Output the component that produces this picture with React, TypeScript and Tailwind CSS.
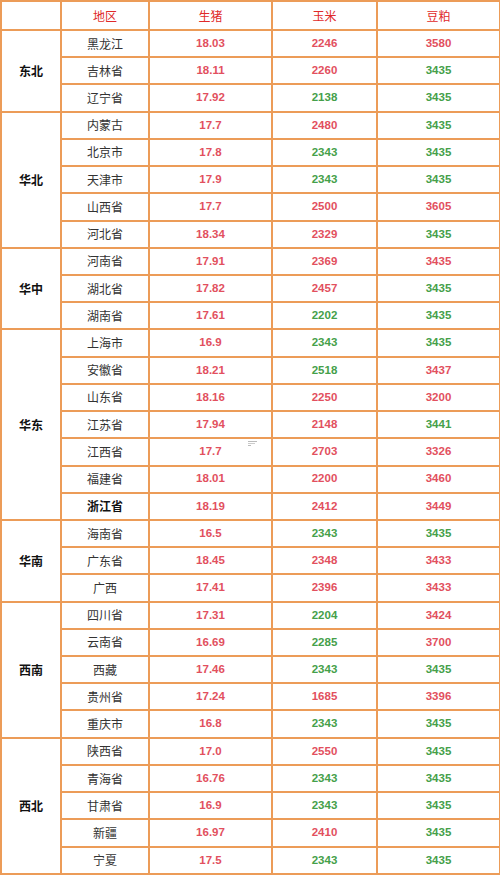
import React from "react";

type Row = { p: string; a: string; b: string; bc: "r" | "g"; c: string; cc: "r" | "g"; bold?: boolean };
type Group = { name: string; rows: Row[] };

const groups: Group[] = [
  { name: "东北", rows: [
    { p: "黑龙江", a: "18.03", b: "2246", bc: "r", c: "3580", cc: "r" },
    { p: "吉林省", a: "18.11", b: "2260", bc: "r", c: "3435", cc: "g" },
    { p: "辽宁省", a: "17.92", b: "2138", bc: "g", c: "3435", cc: "g" },
  ]},
  { name: "华北", rows: [
    { p: "内蒙古", a: "17.7", b: "2480", bc: "r", c: "3435", cc: "g" },
    { p: "北京市", a: "17.8", b: "2343", bc: "g", c: "3435", cc: "g" },
    { p: "天津市", a: "17.9", b: "2343", bc: "g", c: "3435", cc: "g" },
    { p: "山西省", a: "17.7", b: "2500", bc: "r", c: "3605", cc: "r" },
    { p: "河北省", a: "18.34", b: "2329", bc: "r", c: "3435", cc: "g" },
  ]},
  { name: "华中", rows: [
    { p: "河南省", a: "17.91", b: "2369", bc: "r", c: "3435", cc: "r" },
    { p: "湖北省", a: "17.82", b: "2457", bc: "r", c: "3435", cc: "g" },
    { p: "湖南省", a: "17.61", b: "2202", bc: "g", c: "3435", cc: "g" },
  ]},
  { name: "华东", rows: [
    { p: "上海市", a: "16.9", b: "2343", bc: "g", c: "3435", cc: "g" },
    { p: "安徽省", a: "18.21", b: "2518", bc: "g", c: "3437", cc: "r" },
    { p: "山东省", a: "18.16", b: "2250", bc: "r", c: "3200", cc: "r" },
    { p: "江苏省", a: "17.94", b: "2148", bc: "r", c: "3441", cc: "g" },
    { p: "江西省", a: "17.7", b: "2703", bc: "r", c: "3326", cc: "r" },
    { p: "福建省", a: "18.01", b: "2200", bc: "r", c: "3460", cc: "r" },
    { p: "浙江省", a: "18.19", b: "2412", bc: "r", c: "3449", cc: "r", bold: true },
  ]},
  { name: "华南", rows: [
    { p: "海南省", a: "16.5", b: "2343", bc: "g", c: "3435", cc: "g" },
    { p: "广东省", a: "18.45", b: "2348", bc: "r", c: "3433", cc: "r" },
    { p: "广西", a: "17.41", b: "2396", bc: "r", c: "3433", cc: "r" },
  ]},
  { name: "西南", rows: [
    { p: "四川省", a: "17.31", b: "2204", bc: "g", c: "3424", cc: "r" },
    { p: "云南省", a: "16.69", b: "2285", bc: "g", c: "3700", cc: "r" },
    { p: "西藏", a: "17.46", b: "2343", bc: "g", c: "3435", cc: "g" },
    { p: "贵州省", a: "17.24", b: "1685", bc: "r", c: "3396", cc: "r" },
    { p: "重庆市", a: "16.8", b: "2343", bc: "g", c: "3435", cc: "g" },
  ]},
  { name: "西北", rows: [
    { p: "陕西省", a: "17.0", b: "2550", bc: "r", c: "3435", cc: "g" },
    { p: "青海省", a: "16.76", b: "2343", bc: "g", c: "3435", cc: "g" },
    { p: "甘肃省", a: "16.9", b: "2343", bc: "g", c: "3435", cc: "g" },
    { p: "新疆", a: "16.97", b: "2410", bc: "r", c: "3435", cc: "g" },
    { p: "宁夏", a: "17.5", b: "2343", bc: "g", c: "3435", cc: "g" },
  ]},
];

const serif = "font-['Noto_Sans_CJK_SC',serif]";
const num = "font-['Liberation_Sans',Arial,sans-serif] font-bold text-[11.5px]";
const cell = "border-2 border-[#ec9c58] text-center align-middle p-0";
const col = (c: "r" | "g") => (c === "r" ? "text-[#e2505e]" : "text-[#45a04a]");

export default function App() {
  return (
    <div className="w-[500px] h-[875px] bg-white overflow-hidden">
      <table className="table-fixed border-collapse w-[499px] bg-white">
        <colgroup>
          <col className="w-[60px]" />
          <col className="w-[88px]" />
          <col className="w-[123px]" />
          <col className="w-[105px]" />
          <col className="w-[123px]" />
        </colgroup>
        <thead>
          <tr className="h-[29px]">
            <th className={cell}></th>
            <th className={`${cell} ${serif} text-[12px] font-normal text-[#e02a2a]`}>地区</th>
            <th className={`${cell} ${serif} text-[12px] font-normal text-[#e02a2a]`}>生猪</th>
            <th className={`${cell} ${serif} text-[12px] font-normal text-[#e02a2a]`}>玉米</th>
            <th className={`${cell} ${serif} text-[12px] font-normal text-[#e02a2a]`}>豆粕</th>
          </tr>
        </thead>
        <tbody>
          {groups.map((g) =>
            g.rows.map((r, i) => (
              <tr key={g.name + r.p} className="h-[27.22px]">
                {i === 0 && (
                  <td rowSpan={g.rows.length} className={`${cell} ${serif} text-[12px] font-bold text-[#111]`}>
                    {g.name}
                  </td>
                )}
                <td className={`${cell} ${serif} text-[12px] ${r.bold ? "font-bold text-[#111]" : "text-[#333]"}`}>{r.p}</td>
                <td className={`${cell} ${num} text-[#e2505e] relative`}>
                  {r.a}
                  {r.p === "江西省" && (
                    <span className="absolute right-[14px] top-[2px] flex flex-col gap-[1px]">
                      <span className="block w-[9px] h-[1px] bg-[#bbb]" />
                      <span className="block w-[7px] h-[1px] bg-[#ccc]" />
                      <span className="block w-[3px] h-[1px] bg-[#bbb]" />
                    </span>
                  )}
                </td>
                <td className={`${cell} ${num} ${col(r.bc)}`}>{r.b}</td>
                <td className={`${cell} ${num} ${col(r.cc)}`}>{r.c}</td>
              </tr>
            ))
          )}
        </tbody>
      </table>
    </div>
  );
}
